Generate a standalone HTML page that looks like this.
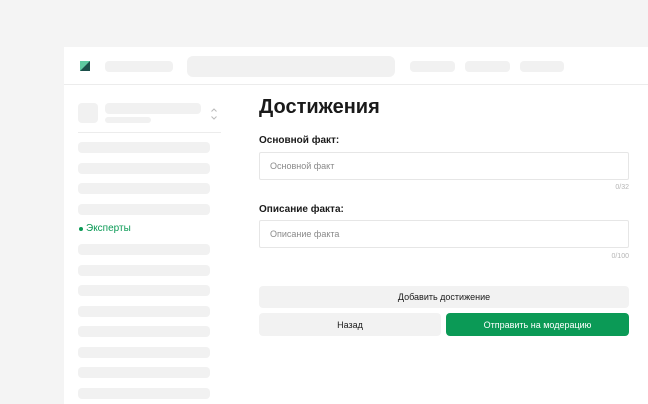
<!DOCTYPE html>
<html><head><meta charset="utf-8"><style>
*{margin:0;padding:0;box-sizing:border-box}
body{width:648px;height:404px;background:#f4f4f4;position:relative;overflow:hidden;font-family:"Liberation Sans",sans-serif}
.a{position:absolute}
.panel{left:64px;top:47px;width:584px;height:357px;background:#fff}
.g{background:#f1f1f1;border-radius:4px}
.t{color:#1a1a1a}
.inp{border:1px solid #e6e6e6;border-radius:2px;background:#fff;font-size:9px;color:#8a8a8a;padding-left:10px;display:flex;align-items:center}
.btn{border-radius:4px;font-size:9px;display:flex;align-items:center;justify-content:center}
</style></head><body>
<div class="a panel"></div>
<div class="a" style="left:64px;top:84px;width:584px;height:1px;background:#ececec"></div>
<svg class="a" style="left:80px;top:61px" width="10" height="10"><rect width="10" height="10" fill="#1c4f4a"/><polygon points="0,0 10,0 0,10" fill="#5ec9a0"/></svg>
<div class="a g" style="left:105px;top:61px;width:68px;height:11px"></div>
<div class="a g" style="left:187px;top:56px;width:208px;height:21px;border-radius:6px"></div>
<div class="a g" style="left:410px;top:61px;width:45px;height:11px"></div>
<div class="a g" style="left:465px;top:61px;width:45px;height:11px"></div>
<div class="a g" style="left:520px;top:61px;width:44px;height:11px"></div>
<div class="a g" style="left:78px;top:103px;width:20px;height:20px"></div>
<div class="a g" style="left:105px;top:103px;width:96px;height:11px"></div>
<div class="a g" style="left:105px;top:117px;width:46px;height:6px"></div>
<svg class="a" style="left:210px;top:107px" width="8" height="14" fill="none" stroke="#bbb" stroke-width="1"><path d="M1.5 4.5 4 2 6.5 4.5M1.5 9.5 4 12 6.5 9.5"/></svg>
<div class="a" style="left:78px;top:132px;width:143px;height:1px;background:#ececec"></div>
<div class="a g" style="left:78px;top:142px;width:132px;height:11px"></div>
<div class="a g" style="left:78px;top:163px;width:132px;height:11px"></div>
<div class="a g" style="left:78px;top:183px;width:132px;height:11px"></div>
<div class="a g" style="left:78px;top:204px;width:132px;height:11px"></div>
<div class="a" style="left:79px;top:227px;width:4px;height:4px;border-radius:50%;background:#0b9a56"></div>
<div class="a" style="left:86px;top:223px;font-size:10px;color:#0b9a56">Эксперты</div>
<div class="a g" style="left:78px;top:244px;width:132px;height:11px"></div>
<div class="a g" style="left:78px;top:265px;width:132px;height:11px"></div>
<div class="a g" style="left:78px;top:285px;width:132px;height:11px"></div>
<div class="a g" style="left:78px;top:306px;width:132px;height:11px"></div>
<div class="a g" style="left:78px;top:326px;width:132px;height:11px"></div>
<div class="a g" style="left:78px;top:347px;width:132px;height:11px"></div>
<div class="a g" style="left:78px;top:367px;width:132px;height:11px"></div>
<div class="a g" style="left:78px;top:388px;width:132px;height:11px"></div>
<div class="a t" style="left:259px;top:96px;font-size:20px;font-weight:bold">Достижения</div>
<div class="a t" style="left:259px;top:135px;font-size:10px;font-weight:bold">Основной факт:</div>
<div class="a inp" style="left:259px;top:152px;width:370px;height:28px">Основной факт</div>
<div class="a" style="right:19px;top:184px;font-size:7px;color:#b5b5b5">0/32</div>
<div class="a t" style="left:259px;top:204px;font-size:10px;font-weight:bold">Описание факта:</div>
<div class="a inp" style="left:259px;top:220px;width:370px;height:28px">Описание факта</div>
<div class="a" style="right:19px;top:253px;font-size:7px;color:#b5b5b5">0/100</div>
<div class="a btn t" style="left:259px;top:286px;width:370px;height:22px;background:#f2f2f2">Добавить достижение</div>
<div class="a btn t" style="left:259px;top:313px;width:182px;height:23px;background:#f2f2f2">Назад</div>
<div class="a btn" style="left:446px;top:313px;width:183px;height:23px;background:#0b9a56;color:#fff">Отправить на модерацию</div>
</body></html>
